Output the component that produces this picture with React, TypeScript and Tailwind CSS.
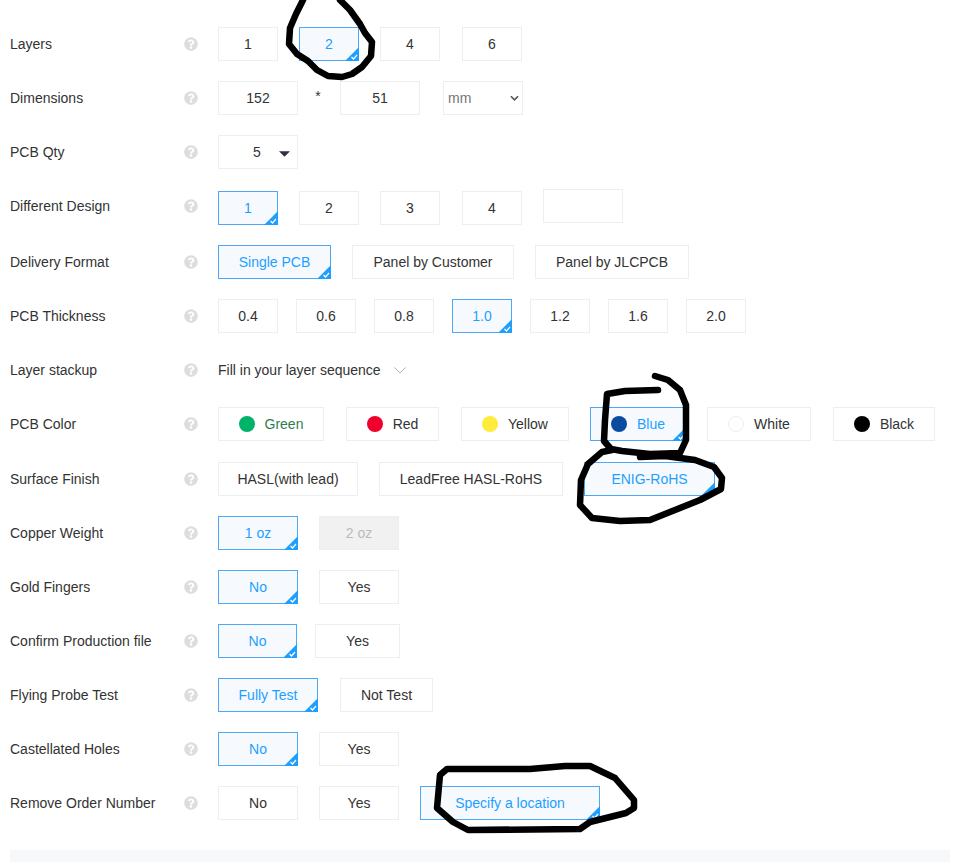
import type { ReactNode } from "react";
import { FaQuestionCircle } from "react-icons/fa";

function Opt({
  children,
  className = "",
  active = false,
}: {
  children?: ReactNode;
  className?: string;
  active?: boolean;
}) {
  return (
    <div
      className={`relative flex h-[34px] shrink-0 items-center justify-center border text-[14px] ${
        active
          ? "border-[#4fa8f5] bg-[#f6faff] text-[#1e9fff]"
          : "border-[#eeeeee] bg-white text-[#333333]"
      } ${className}`}
    >
      {children}
      {active && (
        <svg viewBox="0 0 14 14" className="absolute -bottom-px -right-px h-[14px] w-[14px]">
          <path d="M14 0V14H0Z" fill="#1e9fff" />
          <path d="M6.5 10L8.5 12L12 8" fill="none" stroke="#fff" strokeWidth="1.2" />
        </svg>
      )}
    </div>
  );
}

function Row({
  label,
  children,
  className = "",
}: {
  label: string;
  children: ReactNode;
  className?: string;
}) {
  return (
    <div className={`flex h-[54px] items-center ${className}`}>
      <div className="w-[184px] shrink-0 pl-[10px] text-[14px] text-[#333333]">{label}</div>
      <div className="flex w-[34px] shrink-0">
        <FaQuestionCircle className="text-[14px] text-[#dddddd]" />
      </div>
      <div className="flex items-center gap-[21px]">{children}</div>
    </div>
  );
}

function Dot({ color }: { color: string }) {
  return <span className={`mr-[10px] h-4 w-4 rounded-full ${color}`} />;
}

export default function App() {
  return (
    <div className="relative h-[862px] w-[955px] overflow-hidden bg-white pt-[17px] font-['Liberation_Sans',Arial,sans-serif]">
      <Row label="Layers">
        <Opt className="w-[60px]">1</Opt>
        <Opt className="w-[60px]" active>2</Opt>
        <Opt className="w-[60px]">4</Opt>
        <Opt className="ml-px w-[60px]">6</Opt>
      </Row>
      <Row label="Dimensions">
        <Opt className="w-[80px]">152</Opt>
        <span className="-ml-[8px] -mr-[6px] w-[14px] -translate-y-[2px] text-center text-[14px] text-[#333333]">*</span>
        <Opt className="w-[80px]">51</Opt>
        <div className="ml-[2px] flex h-[34px] w-[80px] items-center justify-between border border-[#eeeeee] pl-1 pr-[3px] text-[14px] text-[#757575]">
          mm
          <svg viewBox="0 0 10 6" className="h-[6px] w-[9px]">
            <path d="M1 1L5 5L9 1" fill="none" stroke="#555555" strokeWidth="1.8" />
          </svg>
        </div>
      </Row>
      <Row label="PCB Qty">
        <Opt className="w-[80px]">
          <span className="ml-[-2px]">5</span>
          <svg viewBox="0 0 10 5" className="absolute left-[60px] top-[15px] h-[6px] w-[11px]">
            <path d="M0 0H10L5 5Z" fill="#2f3140" />
          </svg>
        </Opt>
      </Row>
      <Row label="Different Design">
        <div className="mt-[4px] flex gap-[21px]">
          <Opt className="w-[60px]" active>1</Opt>
          <Opt className="w-[60px]">2</Opt>
          <Opt className="w-[60px]">3</Opt>
          <Opt className="ml-px w-[60px]">4</Opt>
        </div>
        <Opt className="w-[80px]" />
      </Row>
      <Row label="Delivery Format" className="mt-[2px]">
        <Opt className="w-[113px]" active>Single PCB</Opt>
        <Opt className="w-[162px]">Panel by Customer</Opt>
        <Opt className="w-[154px]">Panel by JLCPCB</Opt>
      </Row>
      <Row label="PCB Thickness">
        <div className="flex gap-[18px]">
          <Opt className="w-[60px]">0.4</Opt>
          <Opt className="w-[60px]">0.6</Opt>
          <Opt className="w-[60px]">0.8</Opt>
          <Opt className="w-[60px]" active>1.0</Opt>
          <Opt className="w-[60px]">1.2</Opt>
          <Opt className="w-[60px]">1.6</Opt>
          <Opt className="w-[60px]">2.0</Opt>
        </div>
      </Row>
      <Row label="Layer stackup">
        <div className="flex items-center text-[14px] text-[#333333]">
          Fill in your layer sequence
          <svg viewBox="0 0 12 7" className="ml-[13px] h-[7px] w-[12px]">
            <path d="M0.5 0.5L6 6L11.5 0.5" fill="none" stroke="#999999" strokeWidth="0.8" />
          </svg>
        </div>
      </Row>
      <Row label="PCB Color">
        <Opt className="w-[106px] !text-[#2f7d4f]"><Dot color="bg-[#00b26a]" />Green</Opt>
        <Opt className="ml-px w-[93px]"><Dot color="bg-[#f0002a]" />Red</Opt>
        <Opt className="ml-px w-[108px]"><Dot color="bg-[#ffeb3b]" />Yellow</Opt>
        <Opt className="w-[96px]" active><Dot color="bg-[#0a4a9f]" />Blue</Opt>
        <Opt className="w-[104px]"><Dot color="border border-[#eeeeee] bg-white" />White</Opt>
        <Opt className="ml-px w-[102px]"><Dot color="bg-black" />Black</Opt>
      </Row>
      <Row label="Surface Finish" className="mt-px">
        <Opt className="w-[140px]">HASL(with lead)</Opt>
        <Opt className="w-[184px]">LeadFree HASL-RoHS</Opt>
        <Opt className="w-[131px]" active>ENIG-RoHS</Opt>
      </Row>
      <Row label="Copper Weight">
        <Opt className="w-[80px]" active>1 oz</Opt>
        <Opt className="w-[80px] !bg-[#f1f1f1] !text-[#bbbbbb]">2 oz</Opt>
      </Row>
      <Row label="Gold Fingers">
        <Opt className="w-[80px]" active>No</Opt>
        <Opt className="w-[80px]">Yes</Opt>
      </Row>
      <Row label="Confirm Production file">
        <Opt className="w-[79px]" active>No</Opt>
        <Opt className="-ml-[3px] w-[85px]">Yes</Opt>
      </Row>
      <Row label="Flying Probe Test">
        <Opt className="w-[100px]" active>Fully Test</Opt>
        <Opt className="ml-px w-[93px]">Not Test</Opt>
      </Row>
      <Row label="Castellated Holes">
        <Opt className="w-[80px]" active>No</Opt>
        <Opt className="w-[80px]">Yes</Opt>
      </Row>
      <Row label="Remove Order Number">
        <Opt className="w-[80px]">No</Opt>
        <Opt className="w-[80px]">Yes</Opt>
        <Opt className="w-[180px]" active>Specify a location</Opt>
      </Row>
      <div className="ml-[10px] mr-[5px] mt-[20px] h-[40px] bg-[#f7f8fa]" />

      {/* hand drawn marks over the form */}
      <svg
        viewBox="0 0 955 862"
        className="pointer-events-none absolute left-0 top-0 h-[862px] w-[955px]"
        fill="none"
        stroke="#000000"
        strokeWidth="6.5"
        strokeLinecap="round"
        strokeLinejoin="round"
      >
        <path d="M303 0L296 14L290 28L289 44L297 54L308 61L317 70L328 76L342 77L352 74L362 67L371 56L372 42L365 33L360 24L350 10L340 0" />
        <path d="M658 390L625 391L607 394L605 420L604 441L611 449L622 451L650 454L680 453L686 440L686 420L686 405L680 390L668 380L655 376" />
        <path d="M612 450L602 452L588 464L581 480L580 505L592 518L620 521L650 520L675 510L700 500L721 489L722 478L714 467L695 460L665 456L640 457" />
        <path d="M440 775L447 769L530 769L565 766L590 766L615 778L634 800L634 808L626 813L590 822L580 829L468 830L453 822L437 808Z" />
      </svg>
    </div>
  );
}
